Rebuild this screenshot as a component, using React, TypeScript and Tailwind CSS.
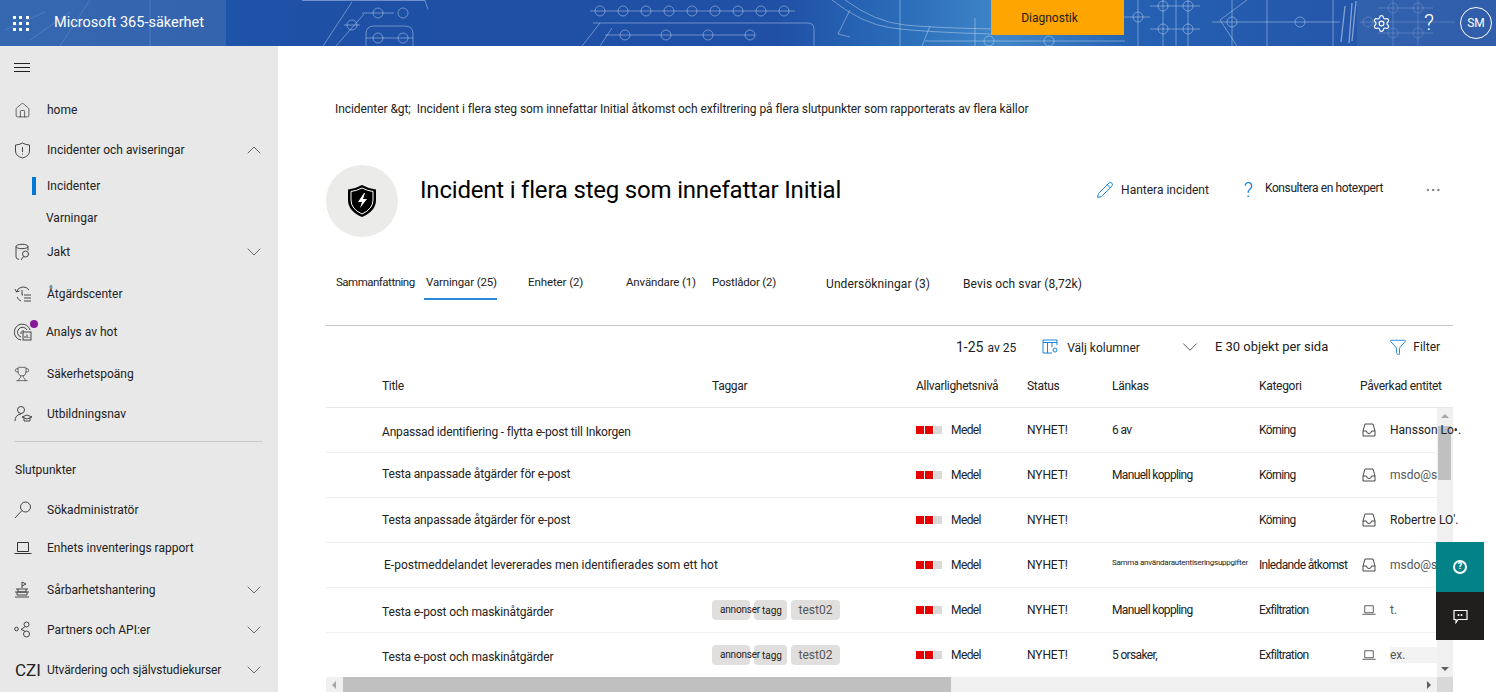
import { ChevronDown, ChevronUp, Ellipsis, Filter, House, Pencil, Settings, Trophy } from 'lucide-react';

const font = "font-['Roboto','Liberation_Sans',sans-serif]";

function Banner() {
  const circles = [
    [378, 13], [403, 13], [352, 25], [378, 38], [403, 38],
    [600, 11], [623, 11], [646, 11], [669, 11], [692, 11], [715, 11], [738, 11], [761, 11], [784, 11],
    [625, 35], [666, 35], [708, 35], [750, 35],
    [1138, 17], [1163, 6], [1188, 6], [1163, 29], [1188, 29], [1232, 22], [1300, 22],
    [1368, 22], [1393, 8], [1418, 8], [1393, 33], [1418, 33], [989, 41], [1049, 41],
  ];
  return (
    <svg className="absolute inset-0" width="1496" height="46" viewBox="0 0 1496 46" fill="none">
      <defs>
        <linearGradient id="sky" x1="0" x2="1" y1="0" y2="0">
          <stop offset="0" stopColor="#1d5fb0" />
          <stop offset="0.2" stopColor="#1e50a6" />
          <stop offset="0.52" stopColor="#1f50a6" />
          <stop offset="0.6" stopColor="#2a6cb8" />
          <stop offset="0.67" stopColor="#3f86c8" />
          <stop offset="0.76" stopColor="#2560b2" />
          <stop offset="1" stopColor="#2450a4" />
        </linearGradient>
      </defs>
      <rect width="1496" height="46" fill="url(#sky)" />
      <g stroke="#d5e4f5" strokeOpacity="0.55" strokeWidth="0.8">
        {circles.map(([x, y], i) => <circle key={i} cx={x} cy={y} r="5" />)}
        <path d="M302 0.500h123l3 9M352 2 323 46M364 14 336 46M362 13h32M344 25h16M366 46V34q0-8 8-8h31q8 0 8 8v12M366 38h47" />
        <path d="M590 11h205M593 23h215q6 0 6 6v17M600 23l-18 23M605 35h150M612 28l-12 18" />
        <path d="M832 0q30 24 60 28t100 6M845 0q30 22 60 25t90 4M850 10l-12 24 12 3M900 0v46M930 26l-8 20M975 18v28" />
        <path d="M925 41h200M1138 0v46M1115 17h35M1163 0v46M1176 0v46M1188 0v46M1150 29h50M1150 6h50" />
        <path d="M1247 0l-27 20 17 26M1232 0v46M1212 22h128M1267 0v46M1333 0v46" />
        <path d="M1352 3l-3 40M1345 6l-4 36M1356 1l-4 40" strokeWidth="1.300" />
        <path d="M1393 0v46M1418 0v46M1360 22h95M1378 8h55M1378 33h55" />
      </g>
      <rect width="226" height="46" fill="#3d6ab0" fillOpacity="0.75" />
      <rect x="1357" width="139" height="46" fill="#3d6ab0" fillOpacity="0.55" />
      <g stroke="#fff" strokeOpacity="0.18" strokeWidth="0.8">
        <path d="M60 46 90 0M70 12 30 40M5 30l40-18M150 0v46" />
      </g>
    </svg>
  );
}

function Header() {
  return (
    <header className="relative h-[46px] flex items-center text-white shrink-0">
      <Banner />
      <div className="relative flex items-center w-full h-full">
        <div className="grid grid-cols-3 gap-[3px] ml-[13px] w-[16px]">
          {Array.from({ length: 9 }).map((_, i) => <span key={i} className="w-[3px] h-[3px] bg-white" />)}
        </div>
        <span className="ml-[25px] text-[14.5px] leading-none whitespace-nowrap">Microsoft 365-säkerhet</span>
        <div className="ml-[787px] self-start w-[133px] h-[35px] bg-[#ffa500] text-[#1c1c1c] text-xs flex items-center justify-center pr-[16px]">Diagnostik</div>
        <Settings size={19} strokeWidth={1.5} className="ml-[248px]" />
        <span className="ml-[33px] text-[22px] font-light leading-none">?</span>
        <div className="ml-[26px] w-[32px] h-[32px] rounded-full border border-white flex items-center justify-center text-xs">SM</div>
      </div>
    </header>
  );
}

function Db() {
  return (
    <svg width="18" height="18" viewBox="0 0 18 18" fill="none" stroke="#333" strokeWidth="0.9">
      <ellipse cx="8" cy="3.5" rx="6" ry="2.2" />
      <path d="M2 3.5V14q0 2 3 2.4M14 3.5v4" />
      <circle cx="11.5" cy="11" r="3" />
      <path d="M9.5 13.5 7 17" />
    </svg>
  );
}
function History() {
  return (
    <svg width="18" height="18" viewBox="0 0 18 18" fill="none" stroke="#333" strokeWidth="0.9">
      <path d="M1 4l1.500 3 3-1M2.500 7A7 7 0 0 1 15 5M3 12a7 7 0 0 0 4 4" />
      <path d="M8 5v5h1M10 10h7M10 13h7M10 16h7" />
    </svg>
  );
}
function Threat() {
  return (
    <svg width="18" height="18" viewBox="0 0 18 18" fill="none" stroke="#333" strokeWidth="0.9">
      <path d="M7 17A8 8 0 1 1 16 7M7 14a5 5 0 1 1 6-7M7 11a2.500 2.500 0 0 1 3-3" />
      <rect x="9" y="9" width="8" height="8" />
      <path d="M11 15v-2M13 15v-3.500M15 15v-1" />
    </svg>
  );
}
function Learner() {
  return (
    <svg width="18" height="18" viewBox="0 0 18 18" fill="none" stroke="#333" strokeWidth="0.9">
      <circle cx="7" cy="5" r="3.500" />
      <path d="M1 16q0-6 6-7M8 12l5-2 5 2-5 2zM10 13v3h6v-3" />
    </svg>
  );
}
function Flag() {
  return (
    <svg width="16" height="18" viewBox="0 0 16 18" fill="none" stroke="#333" strokeWidth="0.9">
      <path d="M8 7V1l4 2-4 2M2 8h12M4 8v3h8V8M1 11h14M3 11v3h10v-3M1 16h14" />
    </svg>
  );
}
function Nodes() {
  return (
    <svg width="18" height="18" viewBox="0 0 18 18" fill="none" stroke="#333" strokeWidth="0.9">
      <circle cx="2.500" cy="8" r="1.800" />
      <circle cx="12.500" cy="3.500" r="2.500" />
      <circle cx="12.500" cy="13" r="3" />
      <path d="M7 8.500q2-1 4-3M7 8.500q2 .5 4 2" />
    </svg>
  );
}
function ShieldMark() {
  return (
    <svg width="17" height="17" viewBox="0 0 17 17" fill="none" stroke="#333" strokeWidth="0.9">
      <path d="M8.500 1Q12 3 15.500 3v6q0 5-7 7-7-2-7-7V3Q5 3 8.500 1zM8.500 5v5M8.500 11.500v1" />
    </svg>
  );
}
function Lens() {
  return (
    <svg width="18" height="18" viewBox="0 0 18 18" fill="none" stroke="#333" strokeWidth="0.9">
      <circle cx="11.500" cy="6" r="5" />
      <path d="M8 9.500 1 17" />
    </svg>
  );
}
function Notebook({ size = 18 }: { size?: number }) {
  return (
    <svg width={size} height={size} viewBox="0 0 18 18" fill="none" stroke="#333" strokeWidth="1">
      <path d="M3.500 3.500h11v9h-11zM0.500 14.500h17" />
    </svg>
  );
}

function NavItem({ icon, label, chevron, tall }: { icon: React.ReactNode; label: string; chevron?: boolean; tall: string }) {
  return (
    <div className={`flex items-center pl-[14px] pr-[12px] ${tall}`}>
      <span className="w-[33px] flex items-center shrink-0 relative">{icon}</span>
      <span className="text-xs text-[#222]">{label}</span>
      {chevron && <ChevronDown size={24} strokeWidth={0.8} className="ml-auto text-[#444]" />}
    </div>
  );
}

function Sidebar() {
  return (
    <aside className="w-[278px] shrink-0 bg-[#e8e8e8] flex flex-col overflow-hidden">
      <div className="flex flex-col gap-[3px] pl-[14px] pt-[17px] pb-[28px]">
        <span className="block w-[16px] h-px bg-[#222]" />
        <span className="block w-[16px] h-px bg-[#222]" />
        <span className="block w-[16px] h-px bg-[#222]" />
      </div>
      <NavItem tall="h-[20px]" label="home" icon={<House size={17} strokeWidth={1} className="text-[#333]" />} />
      <div className="flex items-center pl-[14px] pr-[12px] h-[20px] mt-[20px]">
        <span className="w-[33px]"><ShieldMark /></span>
        <span className="text-xs text-[#222]">Incidenter och aviseringar</span>
        <ChevronUp size={24} strokeWidth={0.8} className="ml-auto text-[#444]" />
      </div>
      <div className="flex items-center h-[20px] mt-[16px] pl-[32px]">
        <span className="w-[4px] h-[18px] bg-[#0078d4]" />
        <span className="ml-[11px] text-xs text-[#222]">Incidenter</span>
      </div>
      <div className="text-xs text-[#222] pl-[46px] mt-[12px] h-[20px] flex items-center">Varningar</div>
      <NavItem tall="h-[20px] mt-[14px]" label="Jakt" chevron icon={<Db />} />
      <NavItem tall="h-[20px] mt-[22px]" label="Åtgärdscenter" icon={<History />} />
      <div className="flex items-center pl-[14px] pr-[12px] h-[20px] mt-[18px]">
        <span className="w-[32px] relative">
          <Threat />
          <span className="absolute left-[16px] -top-[3px] w-[8px] h-[8px] rounded-full bg-[#881798]" />
        </span>
        <span className="text-xs text-[#222]">Analys av hot</span>
      </div>
      <NavItem tall="h-[20px] mt-[22px]" label="Säkerhetspoäng" icon={<Trophy size={16} strokeWidth={1} className="text-[#333]" />} />
      <NavItem tall="h-[20px] mt-[20px]" label="Utbildningsnav" icon={<Learner />} />
      <div className="mx-[14px] mt-[17px] border-t border-[#c8c8c8] w-[248px]" />
      <div className="text-xs text-[#222] pl-[15px] mt-[20px] h-[16px] flex items-center">Slutpunkter</div>
      <NavItem tall="h-[20px] mt-[22px]" label="Sökadministratör" icon={<Lens />} />
      <NavItem tall="h-[20px] mt-[18px]" label="Enhets inventerings rapport" icon={<Notebook />} />
      <NavItem tall="h-[20px] mt-[22px]" label="Sårbarhetshantering" chevron icon={<Flag />} />
      <NavItem tall="h-[20px] mt-[20px]" label="Partners och API:er" chevron icon={<Nodes />} />
      <div className="flex items-center pl-[15px] pr-[12px] h-[20px] mt-[20px]">
        <span className="w-[32px] text-[17px] leading-none text-[#222]">CZI</span>
        <span className="text-xs text-[#222] tracking-[-0.1px] whitespace-nowrap">Utvärdering och självstudiekurser</span>
        <ChevronDown size={24} strokeWidth={0.8} className="ml-auto text-[#444]" />
      </div>
    </aside>
  );
}

const cols = 'grid grid-cols-[330px_204px_111px_85px_147px_101px_1fr] pl-[56px]';

const rows = [
  { title: 'Anpassad identifiering - flytta e-post till Inkorgen', titleClass: 'mt-[4px] tracking-[-0.17px]', link: '6 av', cat: 'Körning', who: 'Hansson Lo•.', mail: true },
  { title: 'Testa anpassade åtgärder för e-post', titleClass: 'mb-[2px] tracking-[-0.14px]', link: 'Manuell koppling', cat: 'Körning', who: 'msdo@s', mail: true },
  { title: 'Testa anpassade åtgärder för e-post', titleClass: 'tracking-[-0.14px]', link: '', cat: 'Körning', who: 'Robertre LO\'.', mail: true },
  { title: 'E-postmeddelandet levererades men identifierades som ett hot', titleClass: 'ml-[2px]', link: 'Samma användarautentiseringsuppgifter', cat: 'Inledande åtkomst', who: 'msdo@s', mail: true, small: true },
  { title: 'Testa e-post och maskinåtgärder', titleClass: 'mt-[4px] tracking-[-0.13px]', link: 'Manuell koppling', cat: 'Exfiltration', who: 't.', tags: true },
  { title: 'Testa e-post och maskinåtgärder', titleClass: 'mt-[4px] tracking-[-0.13px]', link: '5 orsaker,', cat: 'Exfiltration', who: 'ex.', tags: true, shaded: true },
];

function Inbox() {
  return (
    <svg width="14" height="14" viewBox="0 0 14 14" fill="none" stroke="#333" strokeWidth="0.9">
      <path d="M3 1h8l2 7v5H1V8zM1 8h3.500q0 2.500 2.500 2.500T9.500 8H13" />
    </svg>
  );
}

function Severity() {
  return (
    <span className="flex gap-px">
      <span className="w-[8px] h-[8px] bg-[#e60000]" />
      <span className="w-[8px] h-[8px] bg-[#e60000]" />
      <span className="w-[8px] h-[8px] bg-[#d9d9d9]" />
    </span>
  );
}

function Tags() {
  return (
    <div className="flex items-center gap-[4px] text-[#222]">
      <span className="relative z-10 w-[38px] h-[20px] rounded-sm bg-[#e1dfdd] text-[10px] pl-[8px] flex items-center whitespace-nowrap tracking-[-0.2px]">annonser</span>
      <span className="w-[33px] h-[20px] rounded-sm bg-[#e1dfdd] text-[10px] pl-[8px] pt-[2px] flex items-center">tagg</span>
      <span className="w-[49px] h-[20px] rounded-sm bg-[#e1dfdd] text-xs text-[#555] flex items-center justify-center">test02</span>
    </div>
  );
}

function AlertTable() {
  return (
    <div className="relative">
      <div className={`${cols} h-[42px] pb-[2px] items-center text-xs text-[#222] tracking-[-0.3px] border-b border-[#e6e6e6]`}>
        <span>Title</span><span>Taggar</span><span>Allvarlighetsnivå</span><span>Status</span><span>Länkas</span><span>Kategori</span><span className="whitespace-nowrap">Påverkad entitet</span>
      </div>
      <div className="flex">
        <div className="w-[1111px] h-[269px]">
          {rows.map((r, i) => (
            <div key={i} className={`${cols} h-[45px] last:h-[44px] last:border-b-0 items-center text-xs text-[#222] border-b border-[#efefef]`}>
              <span className={`whitespace-nowrap ${r.titleClass}`}>{r.title}</span>
              <span>{r.tags && <Tags />}</span>
              <span className="flex items-center gap-[9px] tracking-[-0.6px]"><Severity /><span>Medel</span></span>
              <span className="tracking-[-0.1px]">NYHET!</span>
              <span className={r.small ? 'text-[8px] tracking-[-0.25px] -mt-[4px] whitespace-nowrap' : 'tracking-[-0.65px] whitespace-nowrap'}>{r.link}</span>
              <span className="tracking-[-0.65px] whitespace-nowrap">{r.cat}</span>
              <span className="flex items-center gap-[14px] ml-[2px] whitespace-nowrap">
                {r.mail ? <Inbox /> : <Notebook size={14} />}
                <span className={`relative z-10 ${r.who.startsWith('msdo') || r.tags ? 'text-[#555]' : ''} ${r.shaded ? 'w-[47px] bg-[#f3f3f3]' : ''}`}>{r.who}</span>
              </span>
            </div>
          ))}
        </div>
        <div className="w-[16px] h-[269px] bg-[#f0f0f0] flex flex-col items-start">
          <span className="ml-[4px] mt-[6px] w-0 h-0 border-x-[4px] border-x-transparent border-b-[4px] border-b-[#a8a8a8]" />
          <span className="ml-[1px] mt-[8px] w-[13px] h-[54px] bg-[#c0c0c0]" />
          <span className="ml-[4px] mt-auto mb-[6px] w-0 h-0 border-x-[4px] border-x-transparent border-t-[4px] border-t-[#606060]" />
        </div>
      </div>
      <div className="flex items-center h-[16px] bg-[#f0f0f0]">
        <span className="ml-[6px] w-0 h-0 border-y-[4px] border-y-transparent border-r-[4px] border-r-[#a8a8a8]" />
        <span className="ml-[7px] w-[608px] h-full bg-[#c0c0c0]" />
        <span className="ml-auto mr-[6px] w-0 h-0 border-y-[4px] border-y-transparent border-l-[4px] border-l-[#606060]" />
        <span className="w-[16px] h-full bg-[#d8d8d8]" />
      </div>
    </div>
  );
}

export default function App() {
  return (
    <div className={`relative w-[1496px] h-[692px] overflow-hidden flex flex-col bg-white ${font}`}>
      <Header />
      <div className="flex flex-1 min-h-0">
        <Sidebar />
        <main className="flex-1 min-w-0 pl-[48px] pr-[43px]">
          <p className="pl-[9px] pt-[55px] text-xs text-[#222] whitespace-nowrap tracking-[-0.07px]">
            Incidenter &amp;gt;<span className="ml-[6px]">Incident i flera steg som innefattar Initial åtkomst och exfiltrering på flera slutpunkter som rapporterats av flera källor</span>
          </p>
          <div className="flex items-center mt-[48px] h-[72px]">
            <div className="w-[72px] h-[72px] rounded-full bg-[#ebebe9] flex items-center justify-center">
              <svg width="32" height="34" viewBox="0 0 32 34">
                <path d="M16 1q7 4 14 4.500V16q0 11-14 17Q2 27 2 16V5.500Q9 5 16 1z" fill="#000" />
                <path d="M16 4q6 3 11 3.500V16q0 9-11 14Q5 25 5 16V7.500Q10 7 16 4z" fill="none" stroke="#fff" strokeWidth="1" />
                <path d="M18 9l-6 9h4l-2 6 7-9h-4l2-6z" fill="#fff" />
              </svg>
            </div>
            <h1 className="ml-[22px] -mt-[22px] text-2xl text-black whitespace-nowrap tracking-[-0.2px]">Incident i flera steg som innefattar Initial</h1>
            <div className="ml-auto -mt-[23px] flex items-center text-xs text-[#222]">
              <Pencil size={18} strokeWidth={1.2} className="text-[#0078d4]" />
              <span className="ml-[7px]">Hantera incident</span>
              <span className="ml-[35px] text-[#0078d4] text-[20px] font-light leading-none">?</span>
              <span className="ml-[12px] -mt-[4px] tracking-[-0.4px] whitespace-nowrap">Konsultera en hotexpert</span>
              <Ellipsis size={18} strokeWidth={1} className="ml-[41px] mr-[11px] text-[#555]" />
            </div>
          </div>
          <nav className="flex items-start mt-[34px] h-[53px] border-b border-[#c8c8c8] text-[11.5px] text-[#222] box-content pb-[1px]">
            <span className="pl-[10px] pt-[3px] w-[98px] whitespace-nowrap tracking-[-0.5px]">Sammanfattning</span>
            <span className="w-[73px] pl-[2px] pt-[3px] h-[29px] border-b-2 border-[#2b88d8] whitespace-nowrap tracking-[-0.15px]">Varningar (25)</span>
            <span className="ml-[31px] pt-[3px] w-[98px] tracking-[-0.1px]">Enheter (2)</span>
            <span className="pt-[3px] w-[86px] whitespace-nowrap tracking-[-0.15px]">Användare (1)</span>
            <span className="pt-[3px] w-[114px] whitespace-nowrap tracking-[-0.2px]">Postlådor (2)</span>
            <span className="pt-[5px] w-[137px] whitespace-nowrap text-xs tracking-[0.1px]">Undersökningar (3)</span>
            <span className="pt-[5px] whitespace-nowrap text-xs tracking-[0.1px]">Bevis och svar (8,72k)</span>
          </nav>
          <div className="flex items-center h-[40px] text-xs text-[#222] pl-[630px] pt-[1px]">
            <span className="text-sm">1-25</span>
            <span className="ml-[4px] mt-[2px]">av 25</span>
            <svg className="ml-[26px]" width="17" height="15" viewBox="0 0 17 15" fill="none" stroke="#0078d4" strokeWidth="0.9">
              <path d="M1 1h14v5M1 3.500h14M1 1v13h9M5.500 3.500V14M10 3.500V8" />
              <circle cx="13" cy="11" r="2" />
            </svg>
            <span className="ml-[8px] mt-[2px]">Välj kolumner</span>
            <ChevronDown size={26} strokeWidth={0.8} className="ml-[37px] text-[#444]" />
            <span className="ml-[12px] text-[13px] whitespace-nowrap">E 30 objekt per sida</span>
            <Filter size={18} strokeWidth={1.1} className="ml-[61px] text-[#0078d4]" />
            <span className="ml-[6px]">Filter</span>
          </div>
          <AlertTable />
        </main>
      </div>
      <div className="absolute left-[1436px] top-[542px] z-20 w-[48px] flex flex-col">
        <div className="h-[50px] bg-[#038387] flex items-center justify-center">
          <span className="w-[14px] h-[14px] rounded-full border-2 border-white text-white text-[9px] font-bold flex items-center justify-center">?</span>
        </div>
        <div className="h-[48px] bg-[#201f1e] flex items-center justify-center">
          <svg width="15" height="15" viewBox="0 0 15 15" fill="none" stroke="#fff" strokeWidth="1.200">
            <path d="M1 1.500h13v9H5l-2 3v-3H1z" />
            <path d="M5.500 5v2M8.500 5v2" strokeWidth="1.600" />
          </svg>
        </div>
      </div>
    </div>
  );
}
